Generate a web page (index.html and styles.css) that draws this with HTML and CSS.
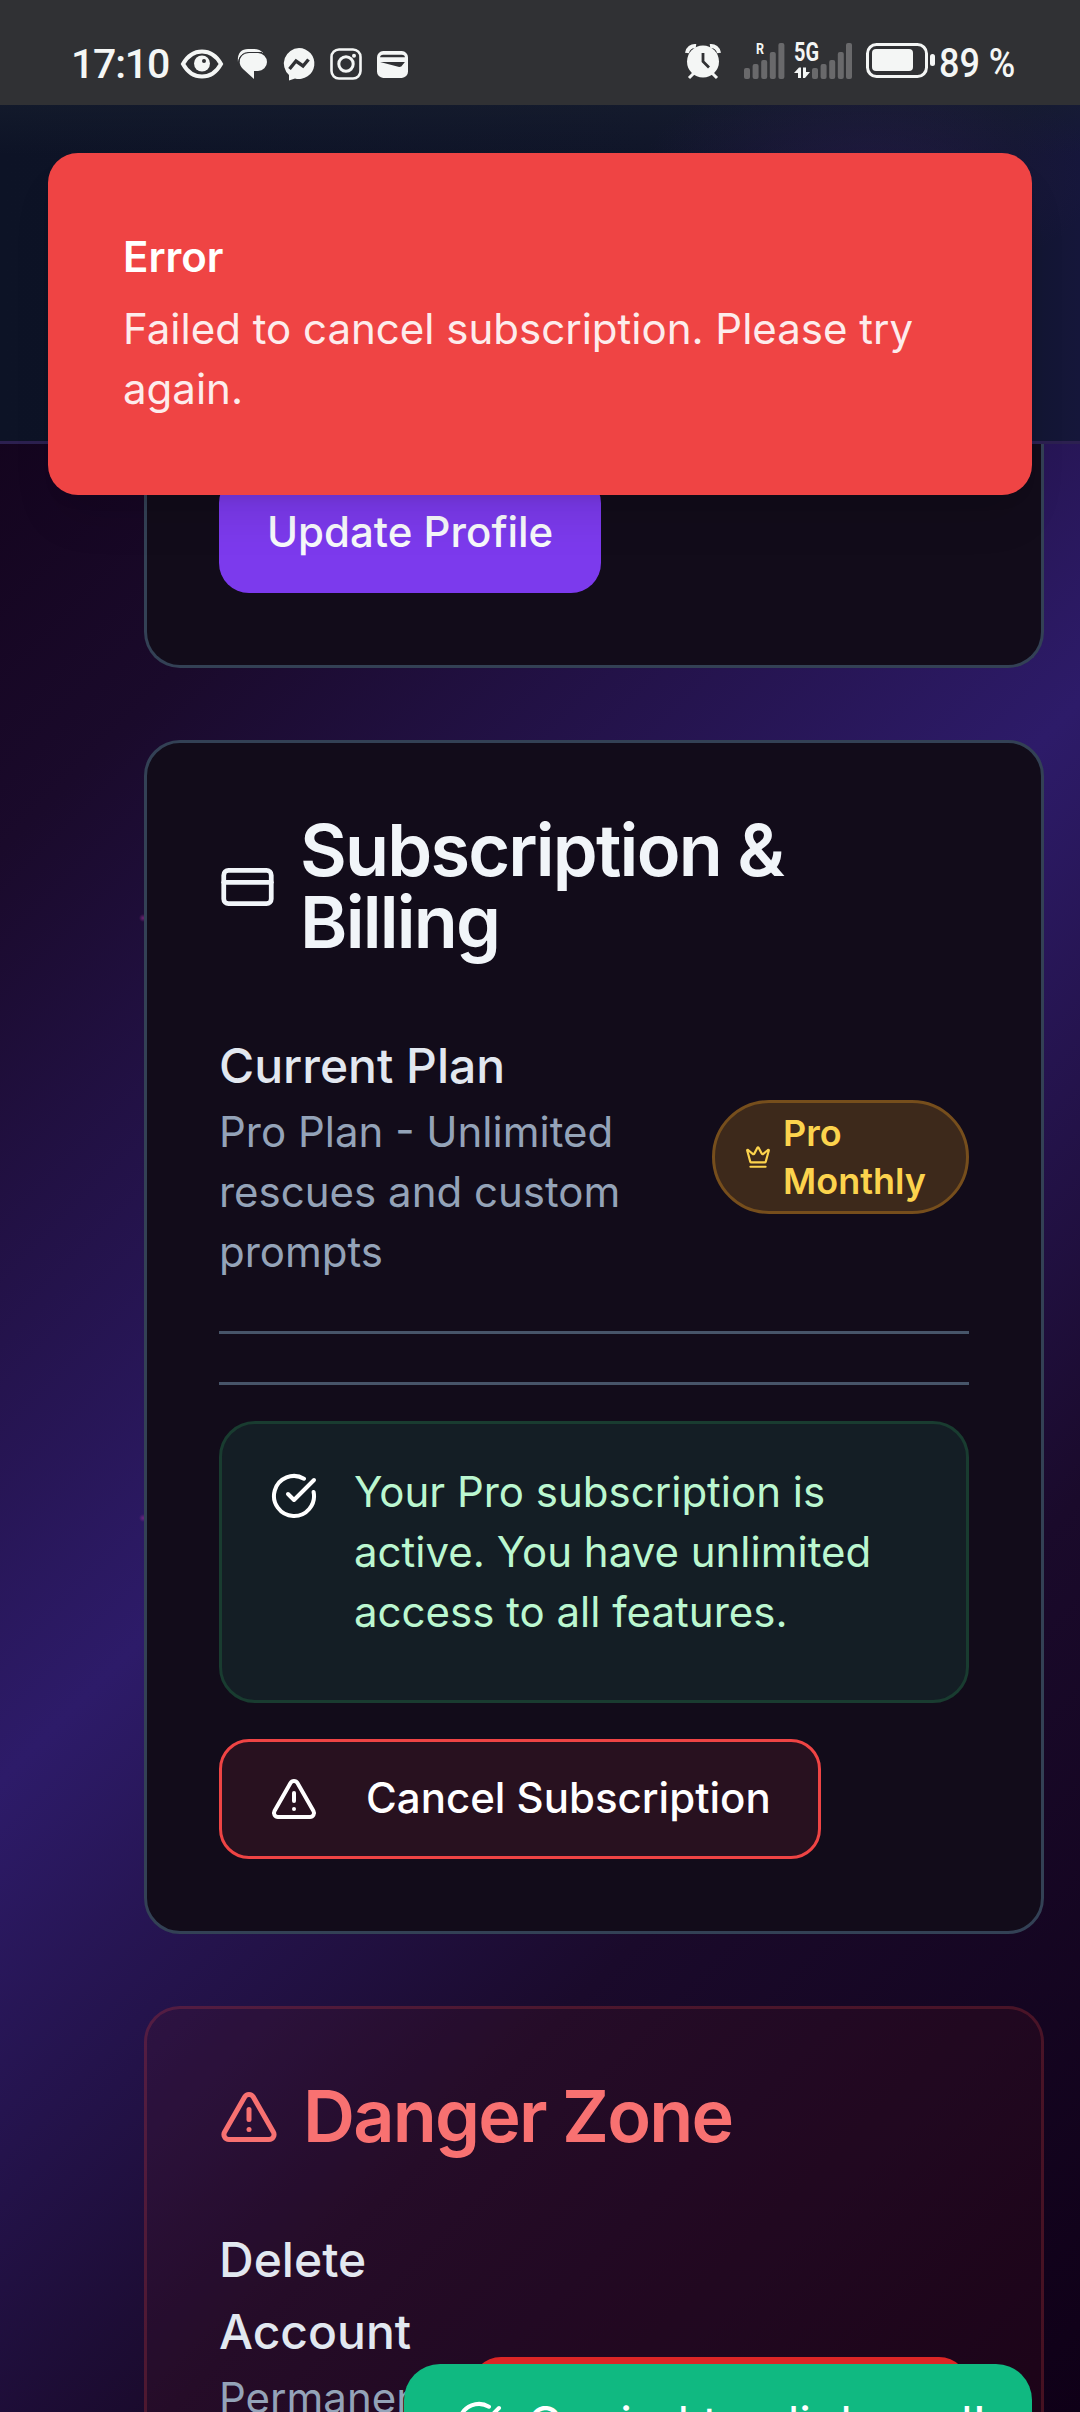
FILE: index.html
```html
<!DOCTYPE html>
<html lang="en">
<head>
<meta charset="utf-8">
<title>Account Settings</title>
<link rel="stylesheet" href="styles.css">
</head>
<body>
<svg class="defs" width="0" height="0" aria-hidden="true">
  <symbol id="alert" viewBox="0 0 24 24"><path d="m21.73 18-8-14a2 2 0 0 0-3.48 0l-8 14A2 2 0 0 0 4 21h16a2 2 0 0 0 1.73-3"/><path d="M12 9v4"/><path d="M12 17h.01"/></symbol>
  <symbol id="check" viewBox="0 0 24 24"><path d="M21.801 10A10 10 0 1 1 17 3.335"/><path d="m9 11 3 3L22 4"/></symbol>
  <symbol id="card" viewBox="0 0 24 24"><rect width="20" height="14" x="2" y="5" rx="2"/><path d="M2 10h20"/></symbol>
  <symbol id="crown" viewBox="0 0 24 24"><path d="M11.562 3.266a.5.5 0 0 1 .876 0L15.39 8.87a1 1 0 0 0 1.516.294L21.183 5.5a.5.5 0 0 1 .798.519l-2.834 10.246a1 1 0 0 1-.956.734H5.81a1 1 0 0 1-.957-.734L2.02 6.02a.5.5 0 0 1 .798-.519l4.276 3.664a1 1 0 0 0 1.516-.294z"/><path d="M5 21h14"/></symbol>
</svg>

<header class="status-bar">
  <div class="status-left">
    <span class="clock">17:10</span>
    <svg class="eye" viewBox="0 0 42 30"><path d="M2 15C7 6 14 2.500 21 2.500S35 6 40 15C35 24 28 27.500 21 27.500S7 24 2 15Z" fill="none" stroke="#f4f6f5" stroke-width="4"/><circle cx="21" cy="14.500" r="8" fill="#f4f6f5"/><circle cx="23" cy="12" r="2" fill="#303134"/></svg>
    <svg class="chat" viewBox="0 0 30 32"><path d="M1 14C0 6 4 1 11 1h6q6 0 9 4H12C6 5 2 8 1 14Z" fill="#f4f6f5"/><path d="M12 5h9a9 9 0 0 1 0 18h-4v8L6 21C-1 14 4 5 12 5Z" fill="#f4f6f5"/><path d="M2 14C2 8 6 4.500 12 4.500h13" fill="none" stroke="#303134" stroke-width="1"/></svg>
    <svg class="messenger" viewBox="0 0 32 34"><path d="M16 1a15.500 15.500 0 1 1-4 30.500L6 33.500V28A15.500 15.500 0 0 1 16 1Z" fill="#f4f6f5"/><path d="m6.500 22 6.500-8 7 5 5.500-6.500" fill="none" stroke="#303134" stroke-width="3.400"/></svg>
    <svg class="instagram" viewBox="0 0 32 32"><rect x="1.500" y="1.500" width="29" height="29" rx="7.500" fill="none" stroke="#f4f6f5" stroke-width="2.600"/><circle cx="16" cy="16" r="7.200" fill="none" stroke="#f4f6f5" stroke-width="3"/><circle cx="24" cy="7.800" r="2" fill="#f4f6f5"/></svg>
    <svg class="wallet" viewBox="0 0 30 26"><rect width="30" height="26" rx="6" fill="#f4f6f5"/><path d="M3 6Q3 3.500 6 3.500h18q3 0 3 2.500Z M3 10.500h24l-3.500 4.500-2 .5Z" fill="#303134"/></svg>
  </div>
  <div class="status-right">
    <svg class="alarm" viewBox="0 0 36 36"><path d="M2 10a8 8 0 0 1 9-7M34 10a8 8 0 0 0-9-7" stroke="#f4f6f5" stroke-width="4" fill="none"/><path d="m4 35 6-6M32 35l-6-6" stroke="#f4f6f5" stroke-width="3"/><circle cx="18" cy="18.500" r="16" fill="#f4f6f5"/><path d="M18 10v8.500l6 6" fill="none" stroke="#303134" stroke-width="2.800"/></svg>
    <svg class="signals" viewBox="0 0 108 36">
      <g fill="#69696b"><rect x="0" y="25" width="6" height="11" rx="2"/><rect x="8.600" y="21" width="6" height="15" rx="2"/><rect x="17.200" y="17" width="6" height="19" rx="2"/><rect x="25.800" y="9" width="6" height="27" rx="2"/><rect x="34.400" y="0" width="6" height="36" rx="2"/><rect x="68" y="25" width="6" height="11" rx="2"/><rect x="76.600" y="21" width="6" height="15" rx="2"/><rect x="85.200" y="17" width="6" height="19" rx="2"/><rect x="93.800" y="9" width="6" height="27" rx="2"/><rect x="102" y="0" width="6" height="36" rx="2"/></g>
      <text x="12" y="11" class="roam" textLength="8" lengthAdjust="spacingAndGlyphs">R</text>
      <text x="50" y="18" class="net" textLength="25" lengthAdjust="spacingAndGlyphs">5G</text>
      <path d="M50 30 55 24.500h2V35h-3v-5ZM59 24.500h3V29h4L61 35h-2Z" fill="#f4f6f5"/>
    </svg>
    <svg class="battery" viewBox="0 0 69 36"><rect x="1.500" y="1.500" width="59" height="32" rx="9" fill="none" stroke="#f4f6f5" stroke-width="3"/><rect x="6" y="6" width="41" height="22" rx="4" fill="#f4f6f5"/><rect x="64" y="11" width="5" height="12" rx="2.500" fill="#f4f6f5"/></svg>
    <span class="percent">89 %</span>
  </div>
</header>

<div class="viewport">
  <nav class="navbar"></nav>
  <main class="content">
    <section class="card card-profile">
      <button class="btn btn-primary">Update Profile</button>
    </section>

    <section class="card">
      <h2 class="card-title"><svg class="icon icon-card"><use href="#card"/></svg><span>Subscription &amp; Billing</span></h2>
      <div class="row">
        <div class="row-text plan-text">
          <h3>Current Plan</h3>
          <p>Pro Plan - Unlimited rescues and custom prompts</p>
        </div>
        <div class="badge"><svg class="icon icon-crown"><use href="#crown"/></svg><span>Pro Monthly</span></div>
      </div>
      <hr class="line line-first">
      <hr class="line">
      <div class="alert">
        <svg class="icon icon-md"><use href="#check"/></svg>
        <p>Your Pro subscription is active. You have unlimited access to all features.</p>
      </div>
      <button class="btn btn-cancel"><svg class="icon icon-md"><use href="#alert"/></svg>Cancel Subscription</button>
    </section>

    <section class="card card-danger">
      <h2 class="card-title"><svg class="icon icon-lg"><use href="#alert"/></svg><span>Danger Zone</span></h2>
      <div class="row">
        <div class="row-text">
          <h3>Delete Account</h3>
          <p>Permanently delete your account and all data</p>
        </div>
        <button class="btn btn-delete"></button>
      </div>
    </section>
  </main>

  <div class="toast toast-error">
    <strong>Error</strong>
    <p>Failed to cancel subscription. Please try again.</p>
  </div>
  <div class="toast-success"><svg class="icon icon-md"><use href="#check"/></svg>Copied to clipboard!</div>
</div>
</body>
</html>
```
FILE: styles.css
```css
* { box-sizing: border-box; margin: 0; padding: 0; }

body {
  width: 1080px;
  height: 2412px;
  overflow: hidden;
  background: #0f0018;
  color: #e2e8f0;
  font-family: Inter, "Liberation Sans", sans-serif;
  font-size: 42px;
  line-height: 60px;
}

.defs { position: absolute; }

.icon {
  flex: none;
  fill: none;
  stroke: currentColor;
  stroke-width: 2;
  stroke-linecap: round;
  stroke-linejoin: round;
}
.icon-lg { width: 60px; height: 60px; }
.icon-md { width: 48px; height: 48px; }
.icon-card { width: 57px; height: 60px; }
.icon-crown { width: 26px; height: 36px; }

/* Status bar */
.status-bar {
  display: flex;
  justify-content: space-between;
  height: 105px;
  padding: 0 64px 0 71px;
  background: #303134;
  color: #f4f6f5;
  font: 500 40px/60px Roboto, sans-serif;
}
.status-left, .status-right { display: flex; align-items: center; height: 60px; }
.status-left { margin-top: 34px; }
.status-right { margin-top: 31px; }
.status-left svg, .status-right svg { flex: none; overflow: visible; }
.clock { width: 110px; font-size: 41px; letter-spacing: -1.200px; }
.eye { width: 42px; height: 30px; }
.chat { width: 30px; height: 32px; margin-left: 14px; }
.messenger { width: 32px; height: 34px; margin-left: 16px; }
.instagram { width: 32px; height: 32px; margin-left: 15px; }
.wallet { width: 31px; height: 27px; margin-left: 15px; }
.alarm { width: 36px; height: 36px; margin-right: 23px; }
.signals { width: 108px; height: 36px; margin-right: 14px; }
.battery { width: 69px; height: 36px; margin-right: 4px; }
.percent {
  width: 77px;
  margin-top: 5px;
  white-space: nowrap;
  transform: scaleX(.9);
  transform-origin: left;
}
.roam { font: 700 15px Roboto, sans-serif; fill: #f4f6f5; }
.net { font: 700 25px Roboto, sans-serif; fill: #f4f6f5; }

/* Page */
.viewport {
  position: relative;
  height: 2307px;
  overflow: hidden;
  background:
    radial-gradient(circle at 143px 813px, #6b2470 0, transparent 4px),
    radial-gradient(circle at 143px 1413px, #6b2480 0, transparent 4px),
    linear-gradient(135deg, #0f0014 0%, #1a0a2b 22%, #2d1b69 49.500%, #1a0a2b 73%, #0f0017 100%);
}
.navbar {
  height: 339px;
  border-bottom: 3px solid #2c2050;
  background:
    radial-gradient(ellipse 230px 110px at 870px 70px, rgba(45, 28, 80, .5), transparent),
    linear-gradient(180deg, rgba(24, 32, 48, .5), transparent 50px),
    linear-gradient(90deg, #0d1326, #101529 60%, #121630 94%, #15163a);
}
.content {
  display: flex;
  flex-direction: column;
  gap: 72px;
  padding: 0 36px 0 144px;
}

.card {
  padding: 72px;
  border: 3px solid #334155;
  border-radius: 36px;
  background: #120c1a;
}
.card-profile {
  padding-top: 29px;
  border-top: 0;
  border-radius: 0 0 36px 36px;
}
.card-danger {
  border-color: rgba(239, 68, 68, .2);
  background: rgba(88, 24, 30, .18);
}
.card-title {
  display: flex;
  align-items: center;
  gap: 24px;
  margin-bottom: 72px;
  color: #f1f5f9;
  font-size: 72px;
  font-weight: 600;
  line-height: 72px;
  letter-spacing: -1.800px;
}
.card-title span { margin: -1px 0 1px; }
.card-danger .card-title { color: #f87171; }

.row { display: flex; align-items: center; justify-content: space-between; }
.row h3 { font-size: 48px; font-weight: 500; line-height: 72px; }
.row p { color: #94a3b8; }
.row-text { width: 252px; margin: -1px 0 1px; }
.plan-text { width: 440px; }

.badge {
  display: flex;
  align-items: center;
  gap: 12px;
  width: 257px;
  padding: 6px 30px;
  border: 3px solid #764e1c;
  border-radius: 57px;
  background: #3d291b;
  color: #fcd34d;
  font-size: 36px;
  font-weight: 600;
  line-height: 48px;
}

.line { border: 0; border-top: 3px solid #475569; margin-top: 48px; }
.line + .line { margin-bottom: 36px; }

.alert {
  display: flex;
  gap: 36px;
  height: 282px;
  margin-bottom: 36px;
  padding: 38px 48px 58px;
  border: 3px solid #193c30;
  border-radius: 36px;
  background: #141e25;
  color: #bbf7d0;
}
.alert .icon { margin-top: 10px; color: #fff; }

.btn {
  display: flex;
  align-items: center;
  height: 120px;
  padding: 0 48px 2px;
  border: 0;
  border-radius: 30px;
  color: #fff;
  font: 500 42px/60px Inter, sans-serif;
}
.btn-primary { background: #7c3aed; color: #f8fafc; }
.btn-cancel {
  gap: 48px;
  width: 602px;
  border: 3px solid #ef4444;
  background: #28111f;
  white-space: nowrap;
}
.btn-cancel .icon { margin-top: 2px; }
.btn-delete { flex: none; width: 498px; background: #dc2626; }

/* Notifications float above the page */
.toast-error {
  position: absolute;
  top: 48px;
  left: 48px;
  width: 984px;
  height: 342px;
  padding: 74px 75px;
  border-radius: 30px;
  background: #ef4444;
  box-shadow: 0 30px 45px -9px rgba(0, 0, 0, .1), 0 12px 18px -12px rgba(0, 0, 0, .1);
  color: #fff;
}
.toast-error strong { display: block; margin-bottom: 12px; font-weight: 600; }
.toast-error p { opacity: .9; }
.toast-success {
  position: absolute;
  top: 2259px;
  right: 48px;
  display: flex;
  align-items: center;
  gap: 24px;
  width: 628px;
  height: 132px;
  padding: 0 48px 12px 51px;
  border-radius: 36px;
  background: #10b981;
  color: #fff;
  font-size: 48px;
  font-weight: 400;
  white-space: nowrap;
}
```
